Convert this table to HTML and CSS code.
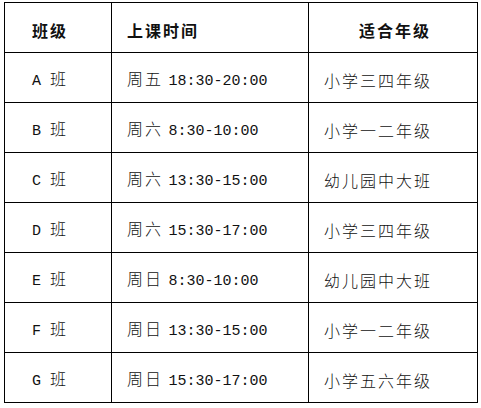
FILE: index.html
```html
<!DOCTYPE html>
<html lang="zh">
<head>
<meta charset="utf-8">
<link rel="stylesheet" href="styles.css">
</head>
<body>
<table class="schedule">
  <colgroup>
    <col class="c1"><col class="c2"><col class="c3">
  </colgroup>
  <thead>
    <tr>
      <th class="k1">班级</th>
      <th class="k2">上课时间</th>
      <th class="k3">适合年级</th>
    </tr>
  </thead>
  <tbody>
    <tr><td class="k1"><span class="tm">A </span>班</td><td class="k2">周五 <span class="tm">18:30-20:00</span></td><td class="k2">小学三四年级</td></tr>
    <tr><td class="k1"><span class="tm">B </span>班</td><td class="k2">周六 <span class="tm">8:30-10:00</span></td><td class="k2">小学一二年级</td></tr>
    <tr><td class="k1"><span class="tm">C </span>班</td><td class="k2">周六 <span class="tm">13:30-15:00</span></td><td class="k2">幼儿园中大班</td></tr>
    <tr><td class="k1"><span class="tm">D </span>班</td><td class="k2">周六 <span class="tm">15:30-17:00</span></td><td class="k2">小学三四年级</td></tr>
    <tr><td class="k1"><span class="tm">E </span>班</td><td class="k2">周日 <span class="tm">8:30-10:00</span></td><td class="k2">幼儿园中大班</td></tr>
    <tr><td class="k1"><span class="tm">F </span>班</td><td class="k2">周日 <span class="tm">13:30-15:00</span></td><td class="k2">小学一二年级</td></tr>
    <tr><td class="k1"><span class="tm">G </span>班</td><td class="k2">周日 <span class="tm">15:30-17:00</span></td><td class="k2">小学五六年级</td></tr>
  </tbody>
</table>
</body>
</html>
```
FILE: styles.css
```css
html, body {
  margin: 0;
  padding: 0;
  background: #fff;
}
body {
  padding: 2px 0 0 4px;
}
.schedule {
  border-collapse: collapse;
  table-layout: fixed;
  width: 473px;
  font-family: "Noto Sans CJK SC", "Noto Sans CJK TC", sans-serif;
  font-size: 16px;
  letter-spacing: 2px;
  color: #111;
}
.c1 { width: 107px; }
.c2 { width: 197px; }
.c3 { width: 169px; }
.schedule tr {
  height: 50px;
}
.schedule th,
.schedule td {
  border: 1px solid #000;
  padding: 5px 0 0 0;
  vertical-align: middle;
  text-align: left;
  white-space: nowrap;
  line-height: 20px;
}
.schedule th {
  font-weight: 700;
}
.schedule td {
  font-weight: 300;
}
.k1 { padding-left: 27px !important; }
.k2 { padding-left: 15px !important; }
.k3 { padding-left: 50px !important; }
.tm {
  font-family: "Liberation Mono", monospace;
  font-size: 15px;
  letter-spacing: 0;
}
```
